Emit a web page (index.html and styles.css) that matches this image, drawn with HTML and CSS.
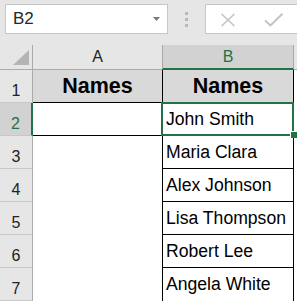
FILE: index.html
```html
<!DOCTYPE html>
<html>
<head>
<meta charset="utf-8">
<link rel="stylesheet" href="styles.css">
</head>
<body>
<div class="app">
  <div class="toolbar">
    <div class="namebox">
      <span class="ref">B2</span>
      <svg class="arrow" width="7" height="4" viewBox="0 0 7 4"><polygon points="0,0 7,0 3.5,4" fill="#7b7b7b"/></svg>
    </div>
    <div class="dots"><i></i><i></i><i></i></div>
    <div class="fbox">
      <svg class="xicon" width="16" height="14" viewBox="0 0 16 14"><path d="M1.5 1 L14.5 13 M14.5 1 L1.5 13" stroke="#c3c3c3" stroke-width="1.6" fill="none"/></svg>
      <svg class="check" width="20" height="14" viewBox="0 0 20 14"><path d="M1 7.5 L6.5 12.5 L18.5 0.8" stroke="#c3c3c3" stroke-width="2" fill="none"/></svg>
    </div>
  </div>
  <div class="sheet">
    <div class="corner"><span class="tri"></span></div>
    <div class="colhdr">A</div>
    <div class="colhdr sel">B</div>
    <div class="colhdr rest"></div>

    <div class="rowhdr">1</div>
    <div class="cell a1">Names</div>
    <div class="cell b head">Names</div>
    <div class="cell c"></div>

    <div class="rowhdr sel">2</div>
    <div class="cell a2"></div>
    <div class="cell b">John Smith</div>
    <div class="cell c"></div>

    <div class="rowhdr">3</div>
    <div class="cell"></div>
    <div class="cell b">Maria Clara</div>
    <div class="cell c"></div>

    <div class="rowhdr">4</div>
    <div class="cell"></div>
    <div class="cell b">Alex Johnson</div>
    <div class="cell c"></div>

    <div class="rowhdr">5</div>
    <div class="cell"></div>
    <div class="cell b">Lisa Thompson</div>
    <div class="cell c"></div>

    <div class="rowhdr">6</div>
    <div class="cell"></div>
    <div class="cell b">Robert Lee</div>
    <div class="cell c"></div>

    <div class="rowhdr">7</div>
    <div class="cell"></div>
    <div class="cell b last">Angela White</div>
    <div class="cell c"></div>

    <div class="selection"></div>
    <div class="handle"></div>
  </div>
</div>
</body>
</html>
```
FILE: styles.css
```css
* { box-sizing: border-box; }
html, body { margin: 0; padding: 0; }
body {
  width: 297px;
  height: 304px;
  overflow: hidden;
  background: #ffffff;
  font-family: "Liberation Sans", Arial, sans-serif;
  color: #000;
}
.app { width: 297px; height: 304px; overflow: hidden; }

.toolbar {
  height: 45px;
  background: #e6e6e6;
  display: flex;
  align-items: flex-start;
  padding: 4px 0 0 5px;
}
.namebox {
  width: 177px;
  height: 30px;
  background: #fff;
  border: 1px solid #c6c6c6;
  display: flex;
  align-items: center;
  justify-content: space-between;
  padding: 0 7px 0 7px;
}
.namebox .ref {
  font-size: 17px;
  color: #262626;
  line-height: 28px;
}
.namebox .arrow { display: block; margin-top: -1px; }
.dots {
  margin-left: 17px;
  padding-top: 8px;
  display: flex;
  flex-direction: column;
  gap: 3px;
}
.dots i {
  display: block;
  width: 3px;
  height: 3px;
  background: #b8b8b8;
}
.fbox {
  margin-left: 17px;
  width: 100px;
  height: 30px;
  background: #fff;
  border: 1px solid #c6c6c6;
  border-right: none;
  display: flex;
  align-items: center;
  padding-left: 14px;
}
.fbox .xicon { display: block; margin-top: 1px; }
.fbox .check { display: block; margin-left: 28px; margin-top: 1px; }

.sheet {
  position: relative;
  display: grid;
  grid-template-columns: 33px 129px 132px 1fr;
  grid-template-rows: 25px repeat(7, 33px) 20px;
}
.corner {
  position: relative;
  background: #e6e6e6;
  border-right: 1px solid #ababab;
  border-bottom: 1px solid #ababab;
}
.tri {
  position: absolute;
  left: 13px;
  top: 5px;
  width: 0;
  height: 0;
  border-left: 16px solid transparent;
  border-bottom: 15px solid #b4b4b4;
}
.colhdr {
  background: #e6e6e6;
  border-bottom: 1px solid #ababab;
  font-size: 16px;
  line-height: 24px;
  text-align: center;
  color: #222;
}
.colhdr.sel {
  background: #d2d2d2;
  color: #217346;
  border-left: 1px solid #ababab;
  border-right: 1px solid #ababab;
  border-bottom: 2px solid #217346;
}
.rowhdr {
  background: #e6e6e6;
  border-right: 1px solid #ababab;
  border-bottom: 1px solid #c8c8c8;
  font-size: 16px;
  line-height: 21px;
  padding-top: 10px;
  text-align: center;
  color: #222;
}
.rowhdr.sel {
  background: #d2d2d2;
  color: #217346;
  border-right: 2px solid #217346;
}
.cell {
  background: #fff;
  font-size: 17.6px;
  line-height: 32px;
  white-space: nowrap;
  overflow: hidden;
}
.cell.a1 {
  background: #d9d9d9;
  border-bottom: 1px solid #000;
  font-weight: bold;
  font-size: 21.5px;
  text-align: center;
}
.cell.a2 { border-bottom: 1px solid #000; }
.cell.b {
  border-left: 1px solid #000;
  border-right: 1px solid #000;
  border-bottom: 1px solid #000;
  padding-left: 3px;
}
.cell.b.last { border-bottom: none; }
.cell.b.head {
  background: #d9d9d9;
  font-weight: bold;
  font-size: 21.5px;
  text-align: center;
  padding-left: 0;
}
.selection {
  position: absolute;
  left: 161px;
  top: 57px;
  width: 133px;
  height: 34px;
  border: 2px solid #217346;
  pointer-events: none;
}
.handle {
  position: absolute;
  left: 290px;
  top: 86px;
  width: 7px;
  height: 7px;
  background: #217346;
  border: 1px solid #fff;
  border-right: none;
  border-bottom: none;
}
```
